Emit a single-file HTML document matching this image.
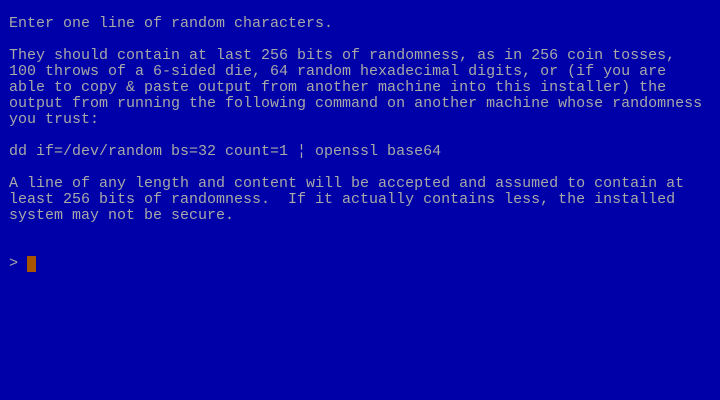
<!DOCTYPE html>
<html><head><meta charset="utf-8"><style>
html,body{margin:0;padding:0;width:720px;height:400px;background:#0000a8;overflow:hidden}
pre{position:absolute;left:9px;top:16px;margin:0;font-family:"Liberation Mono",monospace;font-size:15px;line-height:16px;color:#a8a8a8;font-weight:normal}
.cur{position:absolute;left:27px;top:256px;width:9px;height:16px;background:#a85400}
</style></head><body>
<pre>Enter one line of random characters.

They should contain at last 256 bits of randomness, as in 256 coin tosses,
100 throws of a 6-sided die, 64 random hexadecimal digits, or (if you are
able to copy &amp; paste output from another machine into this installer) the
output from running the following command on another machine whose randomness
you trust:

dd if=/dev/random bs=32 count=1 ¦ openssl base64

A line of any length and content will be accepted and assumed to contain at
least 256 bits of randomness.  If it actually contains less, the installed
system may not be secure.


&gt;</pre>
<div class="cur"></div>
</body></html>
